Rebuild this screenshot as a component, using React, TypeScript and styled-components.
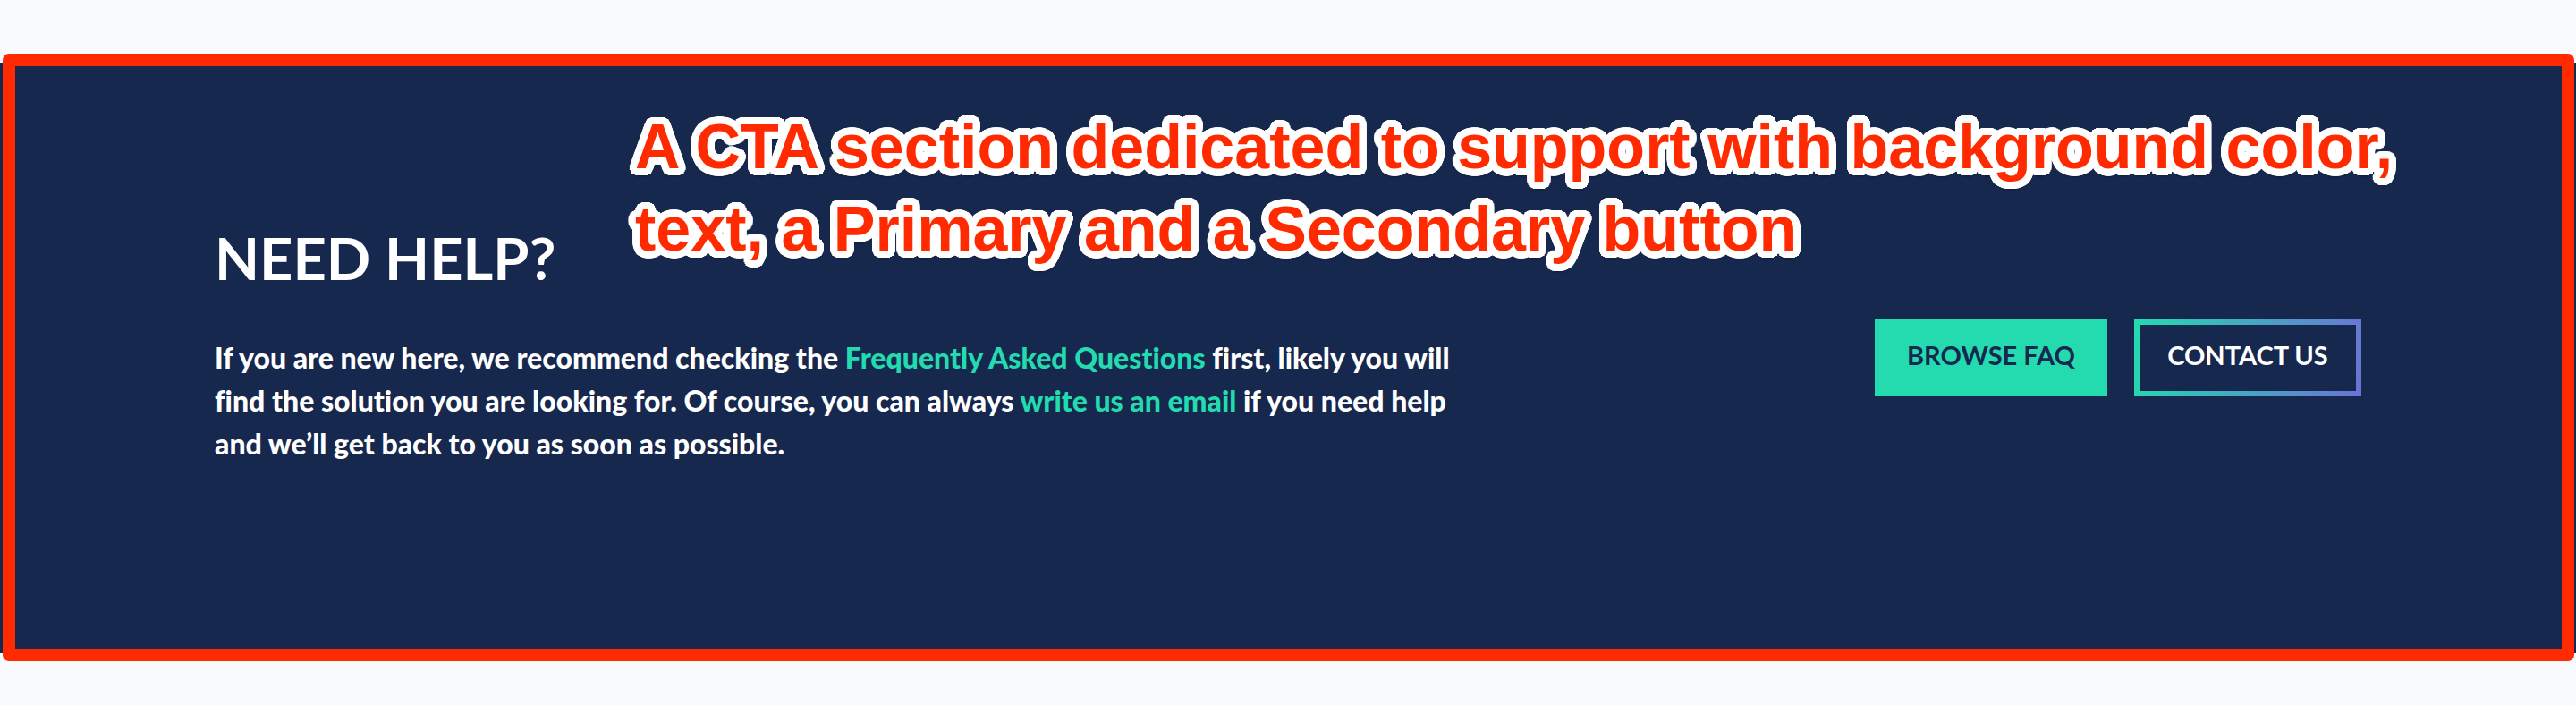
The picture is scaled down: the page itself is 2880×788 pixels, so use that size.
import React from 'react';
import styled, { createGlobalStyle } from 'styled-components';

const navy = '#17284f';
const mint = '#23dbae';
const violet = '#6a73d6';
const red = '#ff2a00';

/* Rounded white outline: rings of hard shadows around the letters. */
const ring = (radius: number, steps: number) =>
  Array.from({ length: steps }, (_, i) => {
    const angle = (i * 2 * Math.PI) / steps;
    const x = Math.round(radius * Math.cos(angle));
    const y = Math.round(radius * Math.sin(angle));
    return `${x}px ${y}px 0 #ffffff`;
  }).join(', ');

const GlobalStyle = createGlobalStyle`
  *, *::before, *::after { box-sizing: border-box; }
  body {
    margin: 0;
    background: #f8fafd;
    font-family: Lato, sans-serif;
  }
`;

const Page = styled.main`
  padding: 70px 0 58px;
`;

const Support = styled.section`
  position: relative;
  display: flex;
  align-items: center;
  justify-content: space-between;
  gap: 64px;
  min-height: 660px;
  padding: 160px 240px;
  background: ${navy};
  color: #ffffff;
`;

const Copy = styled.div`
  flex: 0 1 1400px;
  display: flex;
  flex-direction: column;
  gap: 48px;
`;

const Title = styled.h2`
  margin: 0;
  font-size: 65px;
  line-height: 80px;
  font-weight: 700;
`;

const Text = styled.p`
  margin: 0 0 32px;
  font-size: 32px;
  line-height: 48px;
  font-weight: 900;
  font-variant-ligatures: none;
`;

const TextLink = styled.a`
  color: ${mint};
  text-decoration: none;
`;

const Actions = styled.div`
  display: flex;
  flex: none;
  gap: 30px;
`;

const Button = styled.button<{ $variant: 'primary' | 'secondary' }>`
  min-width: ${({ $variant }) => ($variant === 'primary' ? 260 : 254)}px;
  height: 86px;
  padding: 0 24px 6px;
  border: 6px solid ${({ $variant }) => ($variant === 'primary' ? mint : 'transparent')};
  ${({ $variant }) =>
    $variant === 'secondary' && `border-image: linear-gradient(100deg, ${mint}, ${violet}) 6;`}
  background: ${({ $variant }) => ($variant === 'primary' ? mint : 'transparent')};
  color: ${({ $variant }) => ($variant === 'primary' ? navy : '#ffffff')};
  font-family: inherit;
  font-size: 29px;
  line-height: 40px;
  font-weight: 700;
  white-space: nowrap;
  cursor: pointer;
`;

const Frame = styled.div`
  position: absolute;
  inset: -10px 2px -9px 3px;
  border: 14px solid ${red};
  border-radius: 7px;
  pointer-events: none;
`;

const Note = styled.p`
  position: absolute;
  top: 48px;
  left: 710px;
  right: 160px;
  margin: 0;
  color: ${red};
  font-family: 'Liberation Sans', Arial, sans-serif;
  font-size: 70px;
  line-height: 92px;
  font-weight: 700;
  text-shadow: ${ring(8, 48)}, ${ring(4, 12)}, 0 9px 3px rgba(0, 0, 0, 0.4);
  pointer-events: none;
`;

export default function App() {
  return (
    <>
      <GlobalStyle />
      <Page>
        <Support aria-labelledby="help-title">
          <Copy>
            <Title id="help-title">NEED HELP?</Title>
            <Text>
              If you are new here, we recommend checking the{' '}
              <TextLink href="#faq">Frequently Asked Questions</TextLink> first, likely you will
              <br />
              find the solution you are looking for. Of course, you can always{' '}
              <TextLink href="#email">write us an email</TextLink> if you need help
              <br />
              and we’ll get back to you as soon as possible.
            </Text>
          </Copy>
          <Actions>
            <Button type="button" $variant="primary">BROWSE FAQ</Button>
            <Button type="button" $variant="secondary">CONTACT US</Button>
          </Actions>
          <Frame />
          <Note>
            A CTA section dedicated to support with background color,
            <br />
            text, a Primary and a Secondary button
          </Note>
        </Support>
      </Page>
    </>
  );
}
